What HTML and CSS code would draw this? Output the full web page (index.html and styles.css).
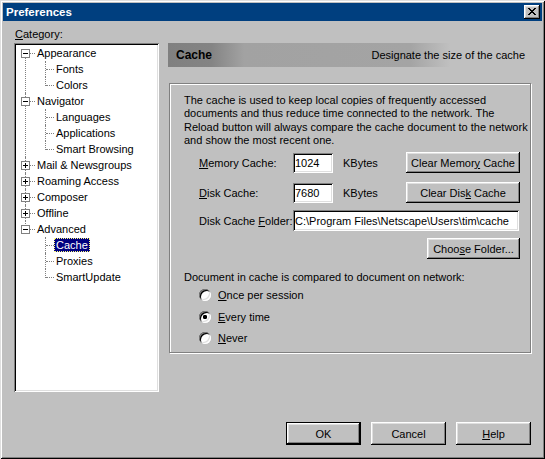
FILE: index.html
```html
<!DOCTYPE html>
<html>
<head>
<meta charset="utf-8">
<title>Preferences</title>
<link rel="stylesheet" href="styles.css">
</head>
<body>
<div class="window">
  <div class="titlebar">
    <span class="title">Preferences</span>
    <button class="close-btn" aria-label="Close">
      <svg width="8" height="7" viewBox="0 0 8 7" shape-rendering="crispEdges"><path fill="#000" d="M0 0h2v1H0zM6 0h2v1H6zM1 1h2v1H1zM5 1h2v1H5zM2 2h4v1H2zM3 3h2v1H3zM2 4h4v1H2zM1 5h2v1H1zM5 5h2v1H5zM0 6h2v1H0zM6 6h2v1H6z"/></svg>
    </button>
  </div>
  <div class="main">
    <div class="left">
      <div class="cat-label"><u>C</u>ategory:</div>
      <div class="tree">
        <ul class="roots">
          <li class="node first">
            <div class="row"><span class="tog"></span><span class="dash"></span><span class="label">Appearance</span></div>
            <ul class="kids">
              <li><div class="krow"><span class="kdash"></span><span class="label">Fonts</span></div></li>
              <li><div class="krow"><span class="kdash"></span><span class="label">Colors</span></div></li>
            </ul>
          </li>
          <li class="node">
            <div class="row"><span class="tog"></span><span class="dash"></span><span class="label">Navigator</span></div>
            <ul class="kids">
              <li><div class="krow"><span class="kdash"></span><span class="label">Languages</span></div></li>
              <li><div class="krow"><span class="kdash"></span><span class="label">Applications</span></div></li>
              <li><div class="krow"><span class="kdash"></span><span class="label">Smart Browsing</span></div></li>
            </ul>
          </li>
          <li class="node"><div class="row"><span class="tog plus"></span><span class="dash"></span><span class="label">Mail &amp; Newsgroups</span></div></li>
          <li class="node"><div class="row"><span class="tog plus"></span><span class="dash"></span><span class="label">Roaming Access</span></div></li>
          <li class="node"><div class="row"><span class="tog plus"></span><span class="dash"></span><span class="label">Composer</span></div></li>
          <li class="node"><div class="row"><span class="tog plus"></span><span class="dash"></span><span class="label">Offline</span></div></li>
          <li class="node last">
            <div class="row"><span class="tog"></span><span class="dash"></span><span class="label">Advanced</span></div>
            <ul class="kids">
              <li><div class="krow"><span class="kdash"></span><span class="label sel">Cache</span></div></li>
              <li><div class="krow"><span class="kdash"></span><span class="label">Proxies</span></div></li>
              <li><div class="krow"><span class="kdash"></span><span class="label">SmartUpdate</span></div></li>
            </ul>
          </li>
        </ul>
      </div>
    </div>
    <div class="right">
      <div class="header">
        <span class="header-title">Cache</span>
        <span class="header-desc">Designate the size of the cache</span>
      </div>
      <div class="group">
        <p class="intro">The cache is used to keep local copies of frequently accessed documents and thus reduce time connected to the network. The Reload button will always compare the cache document to the network and show the most recent one.</p>
        <div class="frow first-row">
          <span class="flabel"><u>M</u>emory Cache:</span>
          <input class="field small" type="text" value="1024">
          <span class="unit">KBytes</span>
          <button class="btn wide">Clear Memor<u>y</u> Cache</button>
        </div>
        <div class="frow r2">
          <span class="flabel"><u>D</u>isk Cache:</span>
          <input class="field small" type="text" value="7680">
          <span class="unit">KBytes</span>
          <button class="btn wide">Clear Dis<u>k</u> Cache</button>
        </div>
        <div class="frow r3">
          <span class="flabel">Disk Cache <u>F</u>older:</span>
          <input class="field path" type="text" value="C:\Program Files\Netscape\Users\tim\cache">
        </div>
        <div class="frow r3">
          <button class="btn choose">Choo<u>s</u>e Folder...</button>
        </div>
        <div class="compare">Document in cache is compared to document on network:</div>
        <div class="radios">
          <div class="rrow"><span class="radio"></span><span><u>O</u>nce per session</span></div>
          <div class="rrow"><span class="radio checked"></span><span><u>E</u>very time</span></div>
          <div class="rrow"><span class="radio"></span><span><u>N</u>ever</span></div>
        </div>
      </div>
    </div>
  </div>
  <div class="footer">
    <button class="btn dlg default">OK</button>
    <button class="btn dlg">Cancel</button>
    <button class="btn dlg"><u>H</u>elp</button>
  </div>
</div>
</body>
</html>
```
FILE: styles.css
```css
html, body {
  margin: 0;
  padding: 0;
  background: #c0c0c0;
}
body {
  font-family: "Liberation Sans", Arial, sans-serif;
  font-size: 11px;
  color: #000;
}
u { text-underline-offset: 1px; }

.window {
  width: 545px;
  height: 459px;
  box-sizing: border-box;
  padding: 3px;
  background: #c0c0c0;
  box-shadow: inset 1px 1px #dfdfdf, inset -1px -1px #000, inset 2px 2px #fff, inset -2px -2px #808080;
}

.titlebar {
  height: 18px;
  background: #003f7f;
  color: #fff;
  display: flex;
  align-items: center;
  justify-content: space-between;
  padding: 0 2px 0 3px;
}
.title {
  font-weight: bold;
  font-size: 11.5px;
}
.close-btn {
  width: 16px;
  height: 14px;
  padding: 3px 0 0 4px;
  border: 0;
  margin: 0;
  background: #c0c0c0;
  box-sizing: border-box;
  display: flex;
  align-items: flex-start;
  box-shadow: inset -1px -1px #000, inset 1px 1px #fff, inset -2px -2px #808080, inset 2px 2px #dfdfdf;
}
.close-btn svg { display: block; }

.main {
  height: 371px;
  box-sizing: border-box;
  padding: 7px 0 0 11px;
  display: flex;
  gap: 9px;
}
.left {
  width: 145px;
  display: flex;
  flex-direction: column;
}
.cat-label {
  height: 13px;
  line-height: 13px;
  margin-bottom: 2px;
  padding-left: 1px;
}

.tree {
  width: 145px;
  height: 349px;
  box-sizing: border-box;
  padding: 2px;
  background: #fff;
  box-shadow: inset 1px 1px #808080, inset -1px -1px #fff, inset 2px 2px #000, inset -2px -2px #dfdfdf;
}
.tree ul {
  list-style: none;
  margin: 0;
  padding: 0;
}
.node {
  position: relative;
}
.node::before {
  content: "";
  position: absolute;
  left: 9px;
  top: 0;
  bottom: 0;
  border-left: 1px dotted #808080;
}
.node.first::before { top: 8px; }
.node.last::before { bottom: auto; height: 9px; }

.row {
  height: 16px;
  display: flex;
  align-items: center;
  padding-left: 5px;
}
.tog {
  flex: none;
  width: 9px;
  height: 9px;
  box-sizing: border-box;
  border: 1px solid #808080;
  background: #fff;
  position: relative;
  z-index: 1;
}
.tog::before {
  content: "";
  position: absolute;
  left: 1px;
  top: 3px;
  width: 5px;
  height: 1px;
  background: #000;
}
.tog.plus::after {
  content: "";
  position: absolute;
  left: 3px;
  top: 1px;
  width: 1px;
  height: 5px;
  background: #000;
}
.dash {
  flex: none;
  width: 5px;
  height: 0;
  border-top: 1px dotted #808080;
}
.label {
  height: 14px;
  line-height: 14px;
  padding: 0 2px;
  white-space: nowrap;
}
.label.sel {
  background: #000080;
  color: #fff;
  outline: 1px dotted #ffff80;
  outline-offset: -1px;
}

.kids li {
  position: relative;
}
.kids li::before {
  content: "";
  position: absolute;
  left: 29px;
  top: 0;
  bottom: 0;
  border-left: 1px dotted #808080;
}
.kids li:last-child::before { bottom: auto; height: 9px; }
.krow {
  height: 16px;
  display: flex;
  align-items: center;
  padding-left: 30px;
}
.kdash {
  flex: none;
  width: 8px;
  height: 0;
  border-top: 1px dotted #808080;
}

.right {
  width: 364px;
  padding-top: 15px;
}
.header {
  width: 362px;
  height: 24px;
  box-sizing: border-box;
  display: flex;
  align-items: center;
  justify-content: space-between;
  padding: 0 5px 0 8px;
  background: linear-gradient(to right, #808080 0%, #848484 12%, #a2a2a2 21%, #a4a4a4 67%, #c0c0c0 78%);
}
.header-title {
  font-weight: bold;
  font-size: 12px;
}

.group {
  margin: 16px 0 0 1px;
  width: 362px;
  height: 270px;
  box-sizing: border-box;
  border: 1px solid #808080;
  box-shadow: inset 1px 1px #fff, 1px 1px #fff;
  padding: 10px 0 0 14px;
}
.intro {
  margin: 0;
  line-height: 13.33px;
}
.frow {
  height: 21px;
  display: flex;
  align-items: center;
  margin-left: 15px;
  padding-right: 10px;
}
.first-row { margin-top: 5px; }
.r2 { margin-top: 9px; }
.r3 { margin-top: 7px; }
.flabel {
  width: 94px;
  flex: none;
  white-space: nowrap;
}
.field {
  font: inherit;
  color: #000;
  height: 20px;
  box-sizing: border-box;
  border: 0;
  margin: 0;
  background: #fff;
  box-shadow: inset 1px 1px #808080, inset -1px -1px #fff, inset 2px 2px #000, inset -2px -2px #dfdfdf;
  padding: 0 0 0 2px;
  outline: none;
}
.field.small { width: 40px; }
.field.path { width: 226px; height: 21px; }
.unit {
  margin-left: 10px;
}
.btn {
  font: inherit;
  color: #000;
  background: #c0c0c0;
  border: 0;
  margin: 0;
  padding: 0;
  height: 21px;
  box-sizing: border-box;
  box-shadow: inset -1px -1px #000, inset 1px 1px #fff, inset -2px -2px #808080, inset 2px 2px #dfdfdf;
  white-space: nowrap;
}
.btn.wide {
  width: 114px;
  margin-left: auto;
}
.btn.choose {
  width: 93px;
  margin-left: auto;
}
.compare {
  margin-top: 12px;
  line-height: 13px;
}
.radios {
  margin-left: 15px;
}
.rrow {
  height: 21.5px;
  display: flex;
  align-items: center;
}
.radio {
  flex: none;
  width: 12px;
  height: 12px;
  border-radius: 50%;
  background: #fff;
  box-shadow: inset 1px 1px #808080, inset -1px -1px #fff, inset 2px 2px #000, inset -2px -2px #dfdfdf;
  margin-right: 7px;
}
.radio.checked {
  background: radial-gradient(circle at 6px 6px, #000 0 2px, #fff 2.3px);
}

.footer {
  display: flex;
  justify-content: flex-end;
  gap: 10px;
  padding: 30px 11px 0 0;
}
.btn.dlg {
  width: 75px;
  height: 23px;
}
.btn.default {
  border: 1px solid #000;
}
```
